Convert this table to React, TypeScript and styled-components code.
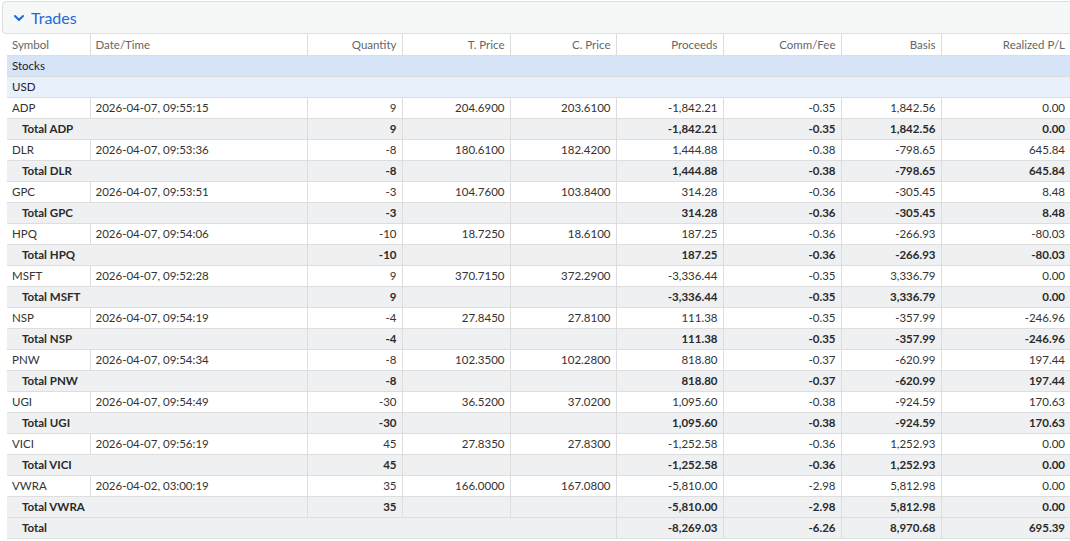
import React from "react";
import styled, { createGlobalStyle } from "styled-components";

const Global = createGlobalStyle`
  html, body { margin: 0; padding: 0; background: #ffffff; overflow: hidden; }
  body { font-family: "Lato", "Open Sans", "Liberation Sans", sans-serif; }
`;

const Page = styled.div`
  width: 1070px;
  height: 541px;
  overflow: hidden;
  padding: 1px 0 0 2px;
  box-sizing: border-box;
`;

const Section = styled.div`
  width: 1080px;
`;

const Header = styled.div`
  display: flex;
  align-items: center;
  gap: 6px;
  padding-left: 10px;
  background: #f6f7f7;
  border: 1px solid #dcdedf;
  border-radius: 4px;
  box-sizing: border-box;
  height: 33px;
  color: #1b6ad8;
  font-size: 16px;
`;

const Body = styled.div`
  padding-left: 5px;
`;

const Table = styled.table`
  border-collapse: collapse;
  table-layout: fixed;
  width: 1063px;
  font-size: 11.5px;
  color: #333;
`;

const HeadCell = styled.th<{ $left?: boolean }>`
  height: 21px;
  padding: 0 5px;
  font-weight: 400;
  color: #666;
  text-align: ${(p) => (p.$left ? "left" : "right")};
  border-right: 1px solid #dddddd;
  border-bottom: 1px solid #dddddd;
  white-space: nowrap;
  box-sizing: border-box;
  &:last-child { border-right: none; }
`;

const GroupRow = styled.tr<{ $level: number }>`
  background: ${(p) => (p.$level === 0 ? "#d6e4f8" : "#e8f0fb")};
  td {
    height: 21px;
    padding: 0 5px;
    color: #222;
    border-bottom: 1px solid #dddddd;
    box-sizing: border-box;
  }
`;

const Row = styled.tr<{ $total?: boolean }>`
  background: ${(p) => (p.$total ? "#eff0f2" : "#ffffff")};
  font-weight: ${(p) => (p.$total ? 700 : 400)};
  color: ${(p) => (p.$total ? "#2a2a2a" : "#333")};
`;

const Cell = styled.td<{ $left?: boolean; $indent?: boolean }>`
  height: 21px;
  padding: 0 5px 0 ${(p) => (p.$indent ? "15px" : "5px")};
  text-align: ${(p) => (p.$left ? "left" : "right")};
  border-right: 1px solid #dddddd;
  border-bottom: 1px solid #dddddd;
  white-space: nowrap;
  box-sizing: border-box;
  &:last-child { border-right: none; }
`;

const Chevron = () => (
  <svg width="12" height="12" viewBox="0 0 12 12">
    <path d="M2 4 L6 8 L10 4" fill="none" stroke="#1b6ad8" strokeWidth="2" strokeLinecap="round" strokeLinejoin="round" />
  </svg>
);

type Trade = {
  sym: string;
  dt: string;
  qty: string;
  tp: string;
  cp: string;
  proc: string;
  comm: string;
  basis: string;
  pl: string;
};

const trades: Trade[] = [
  { sym: "ADP", dt: "2026-04-07, 09:55:15", qty: "9", tp: "204.6900", cp: "203.6100", proc: "-1,842.21", comm: "-0.35", basis: "1,842.56", pl: "0.00" },
  { sym: "DLR", dt: "2026-04-07, 09:53:36", qty: "-8", tp: "180.6100", cp: "182.4200", proc: "1,444.88", comm: "-0.38", basis: "-798.65", pl: "645.84" },
  { sym: "GPC", dt: "2026-04-07, 09:53:51", qty: "-3", tp: "104.7600", cp: "103.8400", proc: "314.28", comm: "-0.36", basis: "-305.45", pl: "8.48" },
  { sym: "HPQ", dt: "2026-04-07, 09:54:06", qty: "-10", tp: "18.7250", cp: "18.6100", proc: "187.25", comm: "-0.36", basis: "-266.93", pl: "-80.03" },
  { sym: "MSFT", dt: "2026-04-07, 09:52:28", qty: "9", tp: "370.7150", cp: "372.2900", proc: "-3,336.44", comm: "-0.35", basis: "3,336.79", pl: "0.00" },
  { sym: "NSP", dt: "2026-04-07, 09:54:19", qty: "-4", tp: "27.8450", cp: "27.8100", proc: "111.38", comm: "-0.35", basis: "-357.99", pl: "-246.96" },
  { sym: "PNW", dt: "2026-04-07, 09:54:34", qty: "-8", tp: "102.3500", cp: "102.2800", proc: "818.80", comm: "-0.37", basis: "-620.99", pl: "197.44" },
  { sym: "UGI", dt: "2026-04-07, 09:54:49", qty: "-30", tp: "36.5200", cp: "37.0200", proc: "1,095.60", comm: "-0.38", basis: "-924.59", pl: "170.63" },
  { sym: "VICI", dt: "2026-04-07, 09:56:19", qty: "45", tp: "27.8350", cp: "27.8300", proc: "-1,252.58", comm: "-0.36", basis: "1,252.93", pl: "0.00" },
  { sym: "VWRA", dt: "2026-04-02, 03:00:19", qty: "35", tp: "166.0000", cp: "167.0800", proc: "-5,810.00", comm: "-2.98", basis: "5,812.98", pl: "0.00" },
];

const widths = [83, 217, 95, 108, 106, 107, 118, 100, 129];

export default function App() {
  return (
    <Page>
      <Global />
      <Section>
        <Header>
          <Chevron />
          <span>Trades</span>
        </Header>
        <Body>
          <Table>
            <colgroup>
              {widths.map((w, i) => (
                <col key={i} style={{ width: w }} />
              ))}
            </colgroup>
            <thead>
              <tr>
                <HeadCell $left>Symbol</HeadCell>
                <HeadCell $left>Date/Time</HeadCell>
                <HeadCell>Quantity</HeadCell>
                <HeadCell>T. Price</HeadCell>
                <HeadCell>C. Price</HeadCell>
                <HeadCell>Proceeds</HeadCell>
                <HeadCell>Comm/Fee</HeadCell>
                <HeadCell>Basis</HeadCell>
                <HeadCell>Realized P/L</HeadCell>
              </tr>
            </thead>
            <tbody>
              <GroupRow $level={0}>
                <td colSpan={9}>Stocks</td>
              </GroupRow>
              <GroupRow $level={1}>
                <td colSpan={9}>USD</td>
              </GroupRow>
              {trades.map((t) => (
                <React.Fragment key={t.sym}>
                  <Row>
                    <Cell $left>{t.sym}</Cell>
                    <Cell $left>{t.dt}</Cell>
                    <Cell>{t.qty}</Cell>
                    <Cell>{t.tp}</Cell>
                    <Cell>{t.cp}</Cell>
                    <Cell>{t.proc}</Cell>
                    <Cell>{t.comm}</Cell>
                    <Cell>{t.basis}</Cell>
                    <Cell>{t.pl}</Cell>
                  </Row>
                  <Row $total>
                    <Cell $left $indent colSpan={2}>Total {t.sym}</Cell>
                    <Cell>{t.qty}</Cell>
                    <Cell />
                    <Cell />
                    <Cell>{t.proc}</Cell>
                    <Cell>{t.comm}</Cell>
                    <Cell>{t.basis}</Cell>
                    <Cell>{t.pl}</Cell>
                  </Row>
                </React.Fragment>
              ))}
              <Row $total>
                <Cell $left $indent colSpan={5}>Total</Cell>
                <Cell>-8,269.03</Cell>
                <Cell>-6.26</Cell>
                <Cell>8,970.68</Cell>
                <Cell>695.39</Cell>
              </Row>
            </tbody>
          </Table>
        </Body>
      </Section>
    </Page>
  );
}
